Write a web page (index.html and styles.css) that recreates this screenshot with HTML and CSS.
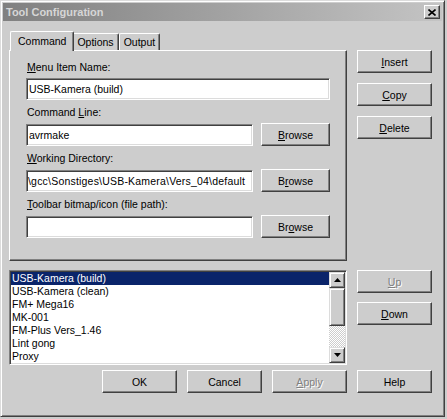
FILE: index.html
```html
<!DOCTYPE html>
<html lang="en">
<head>
    <meta charset="UTF-8">
    <meta name="viewport" content="width=device-width, initial-scale=1.0">
    <title>Tool Configuration</title>
    <link rel="stylesheet" href="styles.css">
</head>
<body>
    <div class="window">
        <!-- Caption bar -->
        <div class="titlebar">
            <span class="title">Tool Configuration</span>
            <span class="close-btn">
                <svg width="8" height="7" viewBox="0 0 8 7"><path d="M0.5 0.5L7.5 6.5M7.5 0.5L0.5 6.5" stroke="#000" stroke-width="1.6"/></svg>
            </span>
        </div>

        <div class="dialog">
            <!-- Tabs with the command page -->
            <div class="tabs-area">
                <div class="tab-strip">
                    <div class="tab selected">Command</div>
                    <div class="tab">Options</div>
                    <div class="tab">Output</div>
                </div>
                <div class="tab-panel">
                    <div class="field">
                        <div class="label"><u>M</u>enu Item Name:</div>
                        <div class="edit">USB-Kamera (build)</div>
                    </div>
                    <div class="field">
                        <div class="label">Command <u>L</u>ine:</div>
                        <div class="field-row">
                            <div class="edit">avrmake</div>
                            <button class="btn browse"><span><u>B</u>rowse</span></button>
                        </div>
                    </div>
                    <div class="field">
                        <div class="label"><u>W</u>orking Directory:</div>
                        <div class="field-row">
                            <div class="edit path"><span>\gcc\Sonstiges\USB-Kamera\Vers_04\default</span></div>
                            <button class="btn browse"><span>B<u>r</u>owse</span></button>
                        </div>
                    </div>
                    <div class="field">
                        <div class="label"><u>T</u>oolbar bitmap/icon (file path):</div>
                        <div class="field-row">
                            <div class="edit"></div>
                            <button class="btn browse"><span>Br<u>o</u>wse</span></button>
                        </div>
                    </div>
                </div>
            </div>

            <div class="side-buttons">
                <button class="btn"><span><u>I</u>nsert</span></button>
                <button class="btn"><span><u>C</u>opy</span></button>
                <button class="btn"><span><u>D</u>elete</span></button>
            </div>

            <!-- Tool list -->
            <div class="listbox">
                <div class="list-items">
                    <div class="list-item selected">USB-Kamera (build)</div>
                    <div class="list-item">USB-Kamera (clean)</div>
                    <div class="list-item">FM+ Mega16</div>
                    <div class="list-item">MK-001</div>
                    <div class="list-item">FM-Plus Vers_1.46</div>
                    <div class="list-item">Lint gong</div>
                    <div class="list-item">Proxy</div>
                </div>
                <div class="scrollbar">
                    <div class="sb-btn">
                        <svg width="7" height="4" viewBox="0 0 7 4"><polygon points="3.5,0 7,4 0,4" fill="#000"/></svg>
                    </div>
                    <div class="sb-thumb"></div>
                    <div class="sb-track"></div>
                    <div class="sb-btn">
                        <svg width="7" height="4" viewBox="0 0 7 4"><polygon points="0,0 7,0 3.5,4" fill="#000"/></svg>
                    </div>
                </div>
            </div>

            <div class="side-buttons list-buttons">
                <button class="btn disabled"><span><u>U</u>p</span></button>
                <button class="btn"><span><u>D</u>own</span></button>
            </div>

            <div class="footer">
                <button class="btn">OK</button>
                <button class="btn">Cancel</button>
                <button class="btn disabled"><span><u>A</u>pply</span></button>
                <button class="btn">Help</button>
            </div>
        </div>
    </div>
</body>
</html>
```

FILE: styles.css
```css
body {
    margin: 0;
    background-color: #cdcdcd;
}
.window {
    width: 445px;
    height: 417px;
    box-sizing: border-box;
    padding: 2px;
    background-color: #cdcdcd;
    border: 1px solid;
    border-color: #dcdcdc #404040 #404040 #dcdcdc;
    box-shadow: inset 1px 1px #fff, inset -1px -1px #808080;
    font: 10.5px "Liberation Sans", Arial, sans-serif;
    color: #000;
}
.titlebar {
    height: 18px;
    display: flex;
    align-items: center;
    justify-content: space-between;
    padding: 0 2px 0 3px;
    background: linear-gradient(to right, #808080, #c4c4c4);
}
.title {
    font-weight: bold;
    font-size: 11px;
    color: #d6d6d6;
}
.close-btn {
    width: 16px;
    height: 14px;
    box-sizing: border-box;
    display: flex;
    align-items: center;
    justify-content: center;
    background-color: #cdcdcd;
    border: 1px solid;
    border-color: #fff #404040 #404040 #fff;
    box-shadow: inset -1px -1px #808080;
}
.dialog {
    display: grid;
    grid-template-columns: 338px 75px;
    column-gap: 10px;
    padding: 10px 0 0 6px;
}

/* tabs */
.tab-strip {
    height: 19px;
    display: flex;
    align-items: flex-end;
    padding-left: 3px;
}
.tab {
    height: 17px;
    box-sizing: border-box;
    padding: 1px 4px 0;
    line-height: 14px;
    border: 1px solid;
    border-color: #fff #404040 transparent #fff;
    border-bottom: none;
    border-radius: 2px 2px 0 0;
    box-shadow: inset -1px 0 #808080;
    background-color: #cdcdcd;
}
.tab.selected {
    height: 20px;
    margin: 0 -2px -1px;
    padding: 2px 7px 0;
    position: relative;
    z-index: 1;
}
.tab-panel {
    height: 211px;
    box-sizing: border-box;
    padding: 10px 16px 0;
    display: flex;
    flex-direction: column;
    gap: 6px;
    border: 1px solid;
    border-color: #fff #404040 #404040 #fff;
    box-shadow: inset -1px -1px #808080;
}
.label {
    line-height: 13px;
    margin-bottom: 4px;
    padding-left: 1px;
}
.field-row {
    display: flex;
    align-items: center;
    gap: 8px;
}
.edit {
    flex: 1;
    height: 22px;
    box-sizing: border-box;
    padding: 1px 2px;
    line-height: 18px;
    white-space: nowrap;
    overflow: hidden;
    display: flex;
    background-color: #fff;
    border: 1px solid;
    border-color: #808080 #fff #fff #808080;
    box-shadow: inset 1px 1px #404040, inset -1px -1px #dcdcdc;
}
.edit.path {
    padding-left: 1px;
    letter-spacing: 0.2px;
}
.edit span {
    flex-shrink: 0;
}

/* push buttons */
.btn {
    width: 75px;
    height: 23px;
    box-sizing: border-box;
    padding: 0;
    font: inherit;
    color: #000;
    background-color: #cdcdcd;
    border: 1px solid;
    border-color: #fff #404040 #404040 #fff;
    box-shadow: inset -1px -1px #808080;
}
.btn.browse {
    width: 69px;
    flex-shrink: 0;
}
.btn.disabled {
    color: #808080;
    text-shadow: 1px 1px #fff;
}
.side-buttons {
    display: flex;
    flex-direction: column;
    gap: 10px;
    padding-top: 19px;
}
.side-buttons.list-buttons {
    padding-top: 0;
    margin-top: 9px;
    gap: 9px;
}

/* list box */
.listbox {
    margin-top: 9px;
    height: 95px;
    box-sizing: border-box;
    padding: 1px;
    display: flex;
    background-color: #fff;
    border: 1px solid;
    border-color: #808080 #fff #fff #808080;
    box-shadow: inset 1px 1px #404040, inset -1px -1px #dcdcdc;
}
.list-items {
    flex: 1;
    overflow: hidden;
}
.list-item {
    height: 13px;
    line-height: 13px;
    padding-left: 1px;
    white-space: nowrap;
}
.list-item.selected {
    background-color: #0a246a;
    color: #fff;
}
.scrollbar {
    width: 16px;
    display: flex;
    flex-direction: column;
}
.sb-btn, .sb-thumb {
    box-sizing: border-box;
    background-color: #cdcdcd;
    border: 1px solid;
    border-color: #dcdcdc #404040 #404040 #dcdcdc;
    box-shadow: inset 1px 1px #fff, inset -1px -1px #808080;
}
.sb-btn {
    height: 16px;
    display: flex;
    align-items: center;
    justify-content: center;
}
.sb-thumb {
    height: 38px;
}
.sb-track {
    flex: 1;
    background: repeating-conic-gradient(#fff 0 25%, #cdcdcd 0 50%) 0 0 / 2px 2px;
}
.footer {
    grid-column: 1 / -1;
    display: flex;
    justify-content: flex-end;
    gap: 10px;
    margin-top: 5px;
}
```
